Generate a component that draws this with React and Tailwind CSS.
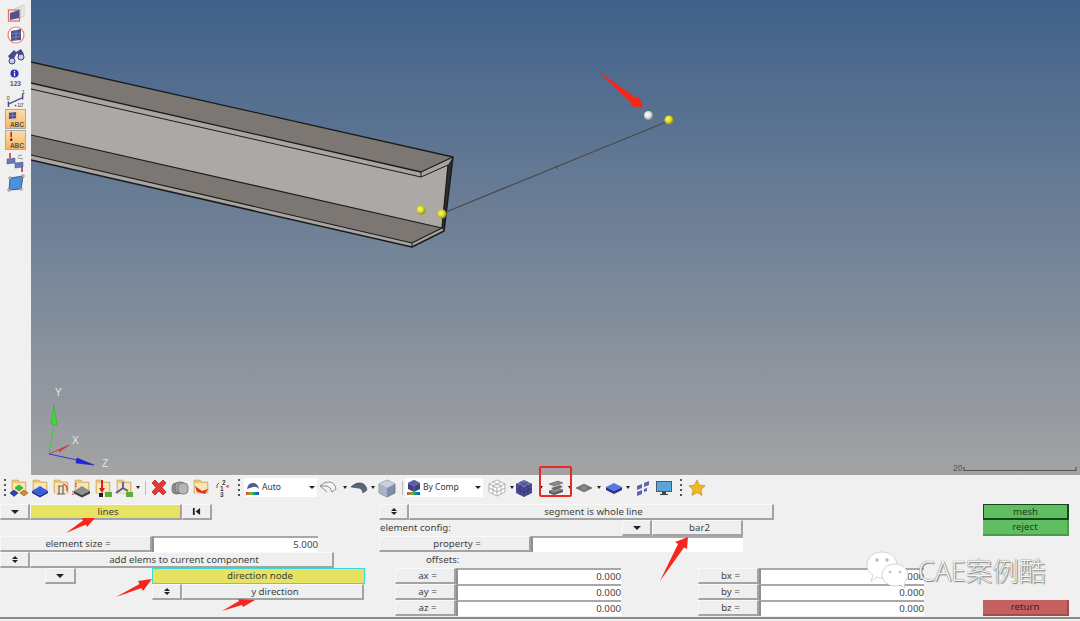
const Folder = ({ children }) => (
  <svg viewBox="0 0 20 20" className="w-5 h-5 shrink-0">
    <path d="M3 2h6l2 2h6v11H3z" fill="#e9c67c" stroke="#b89a58" strokeWidth="0.500" />
    <path d="M4 5h12v10H4z" fill="#f8e6b8" />
    {children}
  </svg>
)

const Caret = ({ className = "" }) => (
  <span className={`w-0 h-0 shrink-0 border-x-[2px] border-t-[3px] border-x-transparent border-t-[#222] ${className}`} />
)

const Dots = ({ className = "" }) => (
  <div className={`flex flex-col gap-[3px] shrink-0 ${className}`}>
    <span className="w-[2px] h-[2px] bg-[#555]" />
    <span className="w-[2px] h-[2px] bg-[#555]" />
    <span className="w-[2px] h-[2px] bg-[#555]" />
    <span className="w-[2px] h-[2px] bg-[#555]" />
  </div>
)

const Sep = ({ className = "" }) => <span className={`w-px h-[14px] bg-[#bdbdbd] shrink-0 ${className}`} />

const Swatch = () => (
  <span className="block w-[13px] h-[3px] bg-linear-to-r from-[#e03030] via-[#30c030] to-[#3030e0]" />
)

const Select = ({ icon, label, className }) => (
  <div className={`flex items-center h-[19px] bg-white shrink-0 ${className}`}>
    <div className="flex flex-col items-center w-[17px] shrink-0">
      {icon}
      <Swatch />
    </div>
    <span className="text-[8.500px] text-[#333] ml-[1px] flex-1 leading-none">{label}</span>
    <Caret className="mr-[2px] border-x-[3px] border-t-[3px]" />
  </div>
)

function Toolbar() {
  return (
    <div className="flex items-center h-[25px] pl-[4px]">
      <Dots />
      <div className="ml-[3px] flex items-center gap-px">
        <Folder>
          <path d="M6 10l4-3 4 3-4 3z" fill="#2fc03a" stroke="#1d6a24" strokeWidth="0.500" />
          <path d="M1 15l4-3 4 3-4 3.500z" fill="#2b3fb5" stroke="#18225f" strokeWidth="0.500" />
          <path d="M11 15l4-3 4 3-4 3z" fill="#d98a2b" stroke="#7a4a14" strokeWidth="0.500" />
        </Folder>
        <Folder>
          <path d="M2 13l8-5 8 5-8 4.500z" fill="#3560e0" />
          <path d="M2 13v2l8 4.500 8-4.500v-2l-8 4.500z" fill="#1d2f8a" />
        </Folder>
        <Folder>
          <path d="M7 8h6M8 8v8M12 8v8M6 16h8" stroke="#666" strokeWidth="1.200" fill="none" />
          <path d="M12 6q5 1 4 7" stroke="#d43030" strokeWidth="1.200" fill="none" />
        </Folder>
        <Folder>
          <path d="M2 13l8-5 8 5-8 4z" fill="#8f8f8f" />
          <path d="M2 13v2.500l8 4 8-4V13l-8 4z" fill="#3d3d3d" />
          <path d="M4 5v4M1 13v4" stroke="#d43030" strokeWidth="1.300" strokeDasharray="1.500 1" />
        </Folder>
        <Folder>
          <path d="M9 2v10" stroke="#d42020" strokeWidth="2" />
          <path d="M6 10h6l-3 5z" fill="#d42020" />
          <rect x="6" y="15" width="4" height="4" fill="#222" />
          <rect x="12" y="14" width="7" height="5" fill="#5cae3a" />
        </Folder>
        <Folder>
          <path d="M9 10V4M9 10l-7 5M9 10l5 3" stroke="#4a58a8" strokeWidth="1.800" fill="none" />
          <rect x="12" y="14" width="7" height="5" fill="#5cae3a" />
        </Folder>
      </div>
      <Caret className="ml-[2px]" />
      <Sep className="ml-[5px]" />
      <div className="ml-[3px] flex items-center gap-px">
        <svg viewBox="0 0 20 20" className="w-5 h-5 shrink-0">
          <path d="M3 5l3-3 4 4 4-4 3 3-4 4.500 4 4.500-3 3-4-4-4 4-3-3 4-4.500z" fill="#e03a3a" stroke="#c02020" strokeWidth="0.800" />
        </svg>
        <svg viewBox="0 0 20 20" className="w-5 h-5 shrink-0">
          <rect x="2" y="5" width="10" height="11" rx="4" fill="#8f8f8f" stroke="#666" strokeWidth="0.700" />
          <rect x="5" y="4" width="10" height="11" rx="4" fill="#a3a3a3" stroke="#666" strokeWidth="0.700" />
          <rect x="8" y="5" width="10" height="11" rx="4" fill="#b5b5b5" stroke="#666" strokeWidth="0.700" />
        </svg>
        <Folder>
          <path d="M4 8l7 5 6-2-3 5-8-2z" fill="#e03030" />
        </Folder>
        <svg viewBox="0 0 20 20" className="w-5 h-5 shrink-0">
          <text x="10" y="7" fontSize="6.500" fontWeight="700" fill="#444" fontFamily="Liberation Sans, sans-serif">2</text>
          <text x="8" y="13" fontSize="6.500" fontWeight="700" fill="#444" fontFamily="Liberation Sans, sans-serif">1</text>
          <text x="8" y="19" fontSize="6.500" fontWeight="700" fill="#444" fontFamily="Liberation Sans, sans-serif">3</text>
          <path d="M5 7l2-2M5 7v3M14 9l2-2v3" stroke="#d43030" strokeWidth="1" fill="none" />
        </svg>
      </div>
      <Dots className="ml-[6px]" />
      <Select
        className="ml-[4px] w-[73px]"
        label="Auto"
        icon={
          <svg viewBox="0 0 14 11" className="w-[14px] h-[11px]">
            <path d="M1 8q1-7 7-6 4 1 5 6-3-3-6-2t-6 2z" fill="#4d5c96" />
          </svg>
        }
      />
      <svg viewBox="0 0 20 20" className="w-5 h-5 shrink-0 ml-px">
        <path d="M2 8q5-5 10-4 5 1 6 7l-4 3q-1-5-5-6z M2 8l7 6" fill="#f4f4f4" stroke="#777" strokeWidth="0.800" />
      </svg>
      <Caret className="ml-[5px]" />
      <svg viewBox="0 0 20 20" className="w-5 h-5 shrink-0 ml-[2px]">
        <path d="M2 9q5-5 10-4 5 1 6 7l-4 3q-1-5-5-5z" fill="#5a6478" stroke="#3b4356" strokeWidth="0.600" />
      </svg>
      <Caret className="ml-[2px]" />
      <svg viewBox="0 0 20 20" className="w-5 h-5 shrink-0 ml-[2px]">
        <path d="M10 2l8 4v9l-8 4-8-4V6z" fill="#7f8fb0" stroke="#555" strokeWidth="0.600" />
        <path d="M10 2l8 4-8 4-8-4z" fill="#c9cfdd" />
        <path d="M10 10v9L2 15V6z" fill="#a8b4ca" />
      </svg>
      <Sep className="ml-[5px]" />
      <div className="ml-[2px]">
        <Select
          className="w-[78px]"
          label="By Comp"
          icon={
            <svg viewBox="0 0 14 12" className="w-[14px] h-3">
              <path d="M7 0l6 3v6l-6 3-6-3V3z" fill="#3d3f7f" />
              <path d="M7 0l6 3-6 3-6-3zM7 6v6" stroke="#8c8fc4" strokeWidth="0.500" fill="#5b5ea6" />
            </svg>
          }
        />
      </div>
      <svg viewBox="0 0 20 20" className="w-5 h-5 shrink-0 ml-[4px]">
        <path d="M10 2l8 4v8l-8 4-8-4V6z M2 6l8 4 8-4 M10 10v8 M6 4l8 4v8 M14 4L6 8v8 M2 10l8 4 8-4" fill="#fff" stroke="#888" strokeWidth="0.600" />
      </svg>
      <Caret className="ml-[3px]" />
      <svg viewBox="0 0 20 20" className="w-5 h-5 shrink-0">
        <path d="M10 2l8 4v9l-8 4-8-4V6z" fill="#4a4c94" />
        <path d="M10 2l8 4-8 4-8-4z" fill="#6f72b8" />
        <path d="M10 10v9M2 6l8 4 8-4M6 4l8 4v9M14 4L6 8v9M2 10.500l8 4 8-4" stroke="#25265e" strokeWidth="0.500" fill="none" />
      </svg>
      <Caret className="ml-[5px]" />
      <svg viewBox="0 0 20 20" className="w-5 h-5 shrink-0 ml-[3px]">
        <path d="M3 6l9-3 5 2-9 3z" fill="#8a8a8a" stroke="#4a4a4a" strokeWidth="0.500" />
        <path d="M5 10l9-3 3 2-9 3z" fill="#6e6e6e" />
        <path d="M3 13l9-3 5 2-9 3z" fill="#8a8a8a" stroke="#4a4a4a" strokeWidth="0.500" />
        <path d="M3 13v2l5 2 9-3v-2l-9 3z" fill="#555" />
      </svg>
      <Caret className="ml-[2px]" />
      <svg viewBox="0 0 20 20" className="w-5 h-5 shrink-0 ml-[2px]">
        <path d="M2 10l8-4 8 4-8 4z" fill="#77736f" stroke="#555" strokeWidth="0.500" />
        <path d="M6 8l8 4M14 8l-8 4M10 6v8" stroke="#aaa" strokeWidth="0.400" />
      </svg>
      <Caret className="ml-[3px]" />
      <svg viewBox="0 0 20 20" className="w-5 h-5 shrink-0 ml-[3px]">
        <path d="M2 9l8-4 8 4-8 4z" fill="#5a78e0" />
        <path d="M2 9v3l8 4 8-4V9l-8 4z" fill="#27358c" />
      </svg>
      <Caret className="ml-[2px]" />
      <svg viewBox="0 0 20 20" className="w-5 h-5 shrink-0 ml-[3px]">
        <path d="M4 8l5-2v4l-5 2zM11 5l5-2v4l-5 2zM4 14l5-2v4l-5 2zM11 11l3-1v3l-3 1z" fill="#5a64b8" />
      </svg>
      <svg viewBox="0 0 20 20" className="w-5 h-5 shrink-0 ml-px">
        <rect x="2" y="3" width="16" height="11" fill="#4c5a6e" />
        <rect x="3" y="4" width="14" height="9" fill="#5aa6dc" />
        <path d="M8 14h4v2h2v1H6v-1h2z" fill="#444" />
      </svg>
      <Dots className="ml-[6px]" />
      <svg viewBox="0 0 20 20" className="w-[18px] h-[18px] shrink-0 ml-[6px]">
        <path d="M10 1l2.700 5.900 6.300.7-4.700 4.300 1.300 6.300L10 15l-5.600 3.200 1.300-6.300L1 7.600l6.300-.7z" fill="#f0b820" stroke="#b8841a" strokeWidth="0.700" />
      </svg>
    </div>
  )
}

const bevel = "h-4 flex items-center justify-center bg-[#efefef] border-t border-l border-t-[#f8f8f8] border-l-[#f8f8f8] border-r-2 border-b-2 border-r-[#a3a3a3] border-b-[#a3a3a3] shrink-0 leading-none"

function Btn({ children, className = "" }) {
  return <div className={`${bevel} pl-[5px] ${className}`}>{children}</div>
}

function IconBtn({ children, className = "" }) {
  return <div className={`${bevel} ${className}`}>{children}</div>
}

function Field({ value, className = "" }) {
  return (
    <div className={`h-4 flex items-center justify-end bg-white border-t-2 border-l-2 border-t-[#a8a8a8] border-l-[#8f8f8f] shrink-0 leading-none ${className}`}>
      {value}
    </div>
  )
}

const DropIcon = () => <Caret className="border-x-[4px] border-t-[4px]" />

const UpDown = () => (
  <div className="flex flex-col items-center gap-px">
    <span className="w-0 h-0 border-x-[3px] border-b-[3px] border-x-transparent border-b-[#222]" />
    <span className="w-0 h-0 border-x-[3px] border-t-[3px] border-x-transparent border-t-[#222]" />
  </div>
)

function Offset({ label, value }) {
  return (
    <div className="flex h-4">
      <Btn className="w-[61px]">{label}</Btn>
      <Field value={value} className="w-[165px]" />
    </div>
  )
}

function Panel() {
  return (
    <div className="flex h-[119px] pt-1 text-[9.700px] text-[#3f3f3f] border-b-2 border-b-[#8c8c8c]">
      {/* left column */}
      <div className="w-[379px] shrink-0">
        <div className="flex h-4">
          <IconBtn className="w-[30px]"><DropIcon /></IconBtn>
          <Btn className="w-[152px] !bg-[#e6e362]">lines</Btn>
          <IconBtn className="w-[30px]">
            <svg viewBox="0 0 10 10" className="w-[9px] h-[9px]">
              <path d="M1 1h2v8H1zM9 1v8L4 5z" fill="#222" />
            </svg>
          </IconBtn>
        </div>
        <div className="h-4" />
        <div className="flex h-4">
          <Btn className="w-[152px]">element size =</Btn>
          <Field value="5.000" className="w-[166px]" />
        </div>
        <div className="flex h-4">
          <IconBtn className="w-[30px]"><UpDown /></IconBtn>
          <Btn className="w-[304px]">add elems to current component</Btn>
        </div>
        <div className="flex h-4 pl-[45px]">
          <IconBtn className="w-[31px]"><DropIcon /></IconBtn>
          <div className="h-4 w-[213px] ml-[76px] pl-[3px] flex items-center justify-center bg-[#e6e362] border border-[#35dcdc] shrink-0 leading-none">
            direction node
          </div>
        </div>
        <div className="flex h-4 pl-[152px]">
          <IconBtn className="w-[30px]"><UpDown /></IconBtn>
          <Btn className="w-[182px]">y direction</Btn>
        </div>
      </div>

      {/* middle column */}
      <div className="w-[604px] shrink-0">
        <div className="flex h-4">
          <IconBtn className="w-[30px]"><UpDown /></IconBtn>
          <Btn className="w-[365px]">segment is whole line</Btn>
        </div>
        <div className="flex h-4 items-center">
          <span className="w-[243px] pl-px leading-none">element config:</span>
          <IconBtn className="w-[30px]"><DropIcon /></IconBtn>
          <Btn className="w-[91px]">bar2</Btn>
        </div>
        <div className="flex h-4">
          <Btn className="w-[152px]">property =</Btn>
          <Field value="" className="w-[212px]" />
        </div>
        <div className="flex h-4 items-center pl-[47px] leading-none">offsets:</div>
        <div className="flex pl-[16px]">
          <div className="w-[303px] shrink-0">
            <Offset label="ax =" value="0.000" />
            <Offset label="ay =" value="0.000" />
            <Offset label="az =" value="0.000" />
          </div>
          <div>
            <Offset label="bx =" value="0.000" />
            <Offset label="by =" value="0.000" />
            <Offset label="bz =" value="0.000" />
          </div>
        </div>
      </div>

      {/* right column */}
      <div className="w-[86px] shrink-0 flex flex-col">
        <div className="h-4 flex items-center justify-center bg-[#5fbf60] border border-[#17451e] border-r-2 border-b-2 leading-none text-[#1f3d22]">mesh</div>
        <div className="h-4 flex items-center justify-center bg-[#5fbf60] border-r-2 border-b-2 border-r-[#4b9a4e] border-b-[#4b9a4e] leading-none text-[#1f3d22]">reject</div>
        <div className="h-4 mt-16 flex items-center justify-center bg-[#c46060] border-r-2 border-b-2 border-r-[#a44c4c] border-b-[#a44c4c] leading-none text-[#3a1c1c]">return</div>
      </div>
    </div>
  )
}

function Sidebar() {
  return (
    <div className="w-[31px] shrink-0 bg-[#f0f0f0] flex flex-col items-center pt-[4px] gap-[1px]">
      <svg viewBox="0 0 20 20" className="w-5 h-5 shrink-0">
        <path d="M8 5l10-4v11l-6 3M12 3.500v11M15 2v11" fill="none" stroke="#aaa" strokeWidth="0.500" />
        <rect x="2.500" y="6" width="11" height="11" fill="none" stroke="#f06a5a" strokeWidth="1.300" />
        <path d="M4 9l9-3v8l-9 2z" fill="#4d5590" />
      </svg>
      <svg viewBox="0 0 20 20" className="w-5 h-5 shrink-0">
        <circle cx="10" cy="10" r="8" fill="#fff" stroke="#f0806f" strokeWidth="1.200" />
        <path d="M5 6l10-2v11l-10 1z" fill="#4d5590" />
        <path d="M5 9l10-1M5 12.500l10-1M10 5v10" stroke="#9aa0cc" strokeWidth="0.500" />
      </svg>
      <svg viewBox="0 0 20 20" className="w-5 h-5 shrink-0">
        <path d="M2 10l6-6 3 3-5 9zM10 6l5-3 3 5-4 3z" fill="#4a4a8c" />
        <circle cx="6" cy="15" r="3" fill="#c9cde8" stroke="#3d3d7d" />
        <circle cx="15" cy="11" r="3" fill="#c9cde8" stroke="#3d3d7d" />
      </svg>
      <div className="flex flex-col items-center mt-[2px] shrink-0">
        <svg viewBox="0 0 10 10" className="w-[9px] h-[9px] self-start">
          <circle cx="5" cy="5" r="4.500" fill="#2b34b8" />
          <rect x="4.300" y="2" width="1.400" height="1.400" fill="#fff" />
          <rect x="4.300" y="4" width="1.400" height="4" fill="#fff" />
        </svg>
        <span className="text-[6.500px] leading-[9px] font-bold text-[#555] font-['Liberation_Sans',sans-serif] mt-px">123</span>
      </div>
      <svg viewBox="0 0 22 20" className="w-[22px] h-[19px] shrink-0">
        <path d="M3 16l15-7V5M3 13v6M18 5v6" stroke="#4a4f8a" strokeWidth="1.500" fill="none" />
        <text x="1" y="12" fontSize="6" fill="#444" fontFamily="Liberation Sans, sans-serif">0</text>
        <text x="17" y="5" fontSize="6" fill="#444" fontFamily="Liberation Sans, sans-serif">1</text>
        <text x="9" y="19" fontSize="5.500" fill="#444" fontFamily="Liberation Sans, sans-serif">+10'</text>
      </svg>
      <div className="w-[21px] h-5 shrink-0 border border-[#aaa] bg-linear-to-b from-[#fcdba8] to-[#f8b660] flex flex-col items-center justify-between">
        <svg viewBox="0 0 10 10" className="w-[9px] h-[9px] self-start ml-[2px] mt-px">
          <path d="M1 2l8-1v7l-8 1z" fill="#4d5590" />
          <path d="M1 5h8M5 1v8" stroke="#9aa0cc" strokeWidth="0.500" />
        </svg>
        <span className="text-[6.500px] leading-[7px] font-bold text-[#555] font-['Liberation_Sans',sans-serif] self-end mr-px">ABC</span>
      </div>
      <div className="w-[21px] h-5 shrink-0 border border-[#aaa] bg-linear-to-b from-[#fcdba8] to-[#f8b660] flex flex-col items-center justify-between">
        <svg viewBox="0 0 10 12" className="w-[8px] h-[12px] self-start ml-[2px]">
          <path d="M4 0v7" stroke="#d42020" strokeWidth="2" />
          <circle cx="4" cy="10" r="1.500" fill="#222" />
        </svg>
        <span className="text-[6.500px] leading-[7px] font-bold text-[#555] font-['Liberation_Sans',sans-serif] self-end mr-px">ABC</span>
      </div>
      <svg viewBox="0 0 20 20" className="w-5 h-5 shrink-0 mt-[1px]">
        <path d="M1 7l8-1v5l-8 1zM9 11l8-1v5l-8 1z" fill="#6a78b8" stroke="#4a4f8a" strokeWidth="0.500" />
        <path d="M4 1v5M16 15v5" stroke="#d42020" strokeWidth="1.500" />
        <path d="M12 4l4-1M12 6l5 1" stroke="#777" strokeWidth="0.800" />
      </svg>
      <svg viewBox="0 0 20 20" className="w-5 h-5 shrink-0">
        <path d="M4 5l13-2-2 13-12 1z" fill="#4a8fe0" stroke="#445" strokeWidth="0.800" />
        <circle cx="4" cy="5" r="1.300" fill="#ddd" stroke="#555" strokeWidth="0.500" />
        <circle cx="17" cy="3" r="1.300" fill="#ddd" stroke="#555" strokeWidth="0.500" />
        <circle cx="15" cy="16" r="1.300" fill="#ddd" stroke="#555" strokeWidth="0.500" />
        <circle cx="3" cy="17" r="1.300" fill="#ddd" stroke="#555" strokeWidth="0.500" />
      </svg>
    </div>
  )
}

function Viewport() {
  return (
    <div className="flex-1 bg-linear-to-b from-[#40618a] to-[#a3a3a3]">
      <svg viewBox="31 0 1049 475" className="block w-full h-full">
        <defs>
          <radialGradient id="yellow" cx="40%" cy="40%" r="60%">
            <stop offset="0%" stopColor="#f6f48a" />
            <stop offset="55%" stopColor="#dedc1e" />
            <stop offset="100%" stopColor="#8f8d18" />
          </radialGradient>
          <radialGradient id="white" cx="40%" cy="40%" r="60%">
            <stop offset="0%" stopColor="#ffffff" />
            <stop offset="60%" stopColor="#dcdcdc" />
            <stop offset="100%" stopColor="#8c8c8c" />
          </radialGradient>
        </defs>
        {/* channel section */}
        <path d="M31 62L453 157 421 172 31 83z" fill="#7c7772" />
        <path d="M421 172L453 157 448 165 421 177z" fill="#a9a5a1" />
        <path d="M31 83L421 172v5L31 89z" fill="#a9a5a1" />
        <path d="M31 89L421 177 448 165 442 228 31 135z" fill="#aca8a5" />
        <path d="M31 135L442 228 412 243 31 155z" fill="#7c7772" />
        <path d="M31 155L412 243v4L31 160z" fill="#a9a5a1" />
        <path d="M412 243L442 228 444 231 412 247z" fill="#a9a5a1" />
        <path d="M453 157L448 165 442 228 444 231z" fill="#2e2e2e" />
        <g stroke="#1c1c1c" fill="none" strokeLinejoin="round">
          <path d="M31 62L453 157 421 172 31 83" strokeWidth="1.300" />
          <path d="M31 89L421 177v-5" strokeWidth="1" />
          <path d="M421 177L448 165" strokeWidth="1" />
          <path d="M453 157L444 231 412 247 31 160" strokeWidth="1.500" />
          <path d="M448 165L442 228" strokeWidth="1.300" />
          <path d="M31 135L442 228 412 243 31 155" strokeWidth="1.200" />
          <path d="M412 243v4" strokeWidth="1" />
        </g>
        {/* line and nodes */}
        <path d="M446 212L666 122" stroke="#4a4a4a" strokeWidth="1.300" />
        <path d="M556 165l1 4" stroke="#4a4a4a" strokeWidth="0.800" />
        <circle cx="421" cy="210" r="4.500" fill="url(#yellow)" />
        <circle cx="442" cy="214" r="4.500" fill="url(#yellow)" />
        <circle cx="669" cy="120" r="4.500" fill="url(#yellow)" />
        <circle cx="648.500" cy="115.500" r="4.500" fill="url(#white)" />
        {/* triad */}
        <path d="M49 454L54 425" stroke="#2fd02f" strokeWidth="0.900" />
        <path d="M54 405L57 425 53 424 51 424z" fill="#35e035" stroke="#22a022" strokeWidth="0.400" />
        <path d="M49 454L60 449" stroke="#e03030" strokeWidth="0.900" />
        <path d="M69 445L60 449 59 452z" fill="#e84040" stroke="#c02020" strokeWidth="0.500" />
        <path d="M49 454L77 460" stroke="#2a2ae0" strokeWidth="0.900" />
        <path d="M94 465L77 458 76 463z" fill="#2020e8" stroke="#1818b0" strokeWidth="0.500" />
        <g fontSize="10" fill="#e6e6e6" fontFamily="Liberation Sans, sans-serif">
          <text x="55" y="396">Y</text>
          <text x="72" y="444">X</text>
          <text x="102" y="467">Z</text>
        </g>
        {/* scale */}
        <text x="953" y="471" fontSize="8.500" fill="#555" fontFamily="Liberation Sans, sans-serif">20</text>
        <path d="M964 467v3.500H1076V467" stroke="#555" strokeWidth="1.200" fill="none" />
      </svg>
    </div>
  )
}

function Watermark() {
  return (
    <div className="absolute left-[865px] top-[551px] flex items-center">
      <svg viewBox="0 0 50 40" className="w-[50px] h-[40px] shrink-0">
        <path d="M17 1c9 0 15 6 15 13 0 8-7 13-15 13-2 0-3 0-5-1l-6 4 2-6c-4-2-6-6-6-10C2 7 8 1 17 1z" fill="#fff" stroke="#c8c8c8" strokeWidth="0.800" />
        <path d="M30 13c7 0 13 5 13 11 0 3-2 6-4 8l1 5-5-3c-2 1-3 1-5 1-7 0-13-5-13-11s6-11 13-11z" fill="#fff" stroke="#c8c8c8" strokeWidth="0.800" />
        <circle cx="12" cy="9" r="1.700" fill="#bbb" />
        <circle cx="22" cy="9" r="1.700" fill="#bbb" />
        <circle cx="25" cy="21" r="1.300" fill="#bbb" />
        <circle cx="35" cy="21" r="1.300" fill="#bbb" />
      </svg>
      <span className="ml-[3px] text-[26.700px] leading-none font-light text-[#f4f4f4] [text-shadow:0_0_1px_#555,1px_1px_1px_#888] font-['Noto_Sans','Noto_Sans_CJK_SC',sans-serif]">CAE案例酷</span>
    </div>
  )
}

function Annotations() {
  return (
    <>
      <svg viewBox="0 0 1080 621" className="absolute inset-0 w-full h-full pointer-events-none">
        <g fill="#f5261b">
          <path d="M598 71L637 98.500 639 96 643 108 630 106 632 104z" />
          <path d="M66 533L83 520.500 82 518 95 518 87 527 86 524.500z" />
          <path d="M116 597L139.500 584 138 581 152 579 143 591 141.500 588z" />
          <path d="M222 611L239 601 238 599 255 600 243 607 242 605z" />
          <path d="M660 581L678 544 675 542 688 537 687 549 684 547.500z" />
        </g>
      </svg>
      <div className="absolute left-[539px] top-[466px] w-[33px] h-[31px] border-2 border-[#e52b24] rounded-[2px]" />
    </>
  )
}

export default function App() {
  return (
    <div className="relative w-[1080px] h-[621px] overflow-hidden bg-[#f0f0f0] font-['Noto_Sans','Noto_Sans_CJK_SC',sans-serif]">
      <div className="flex h-[475px]">
        <Sidebar />
        <Viewport />
      </div>
      <Toolbar />
      <Panel />
      <Watermark />
      <Annotations />
    </div>
  )
}
